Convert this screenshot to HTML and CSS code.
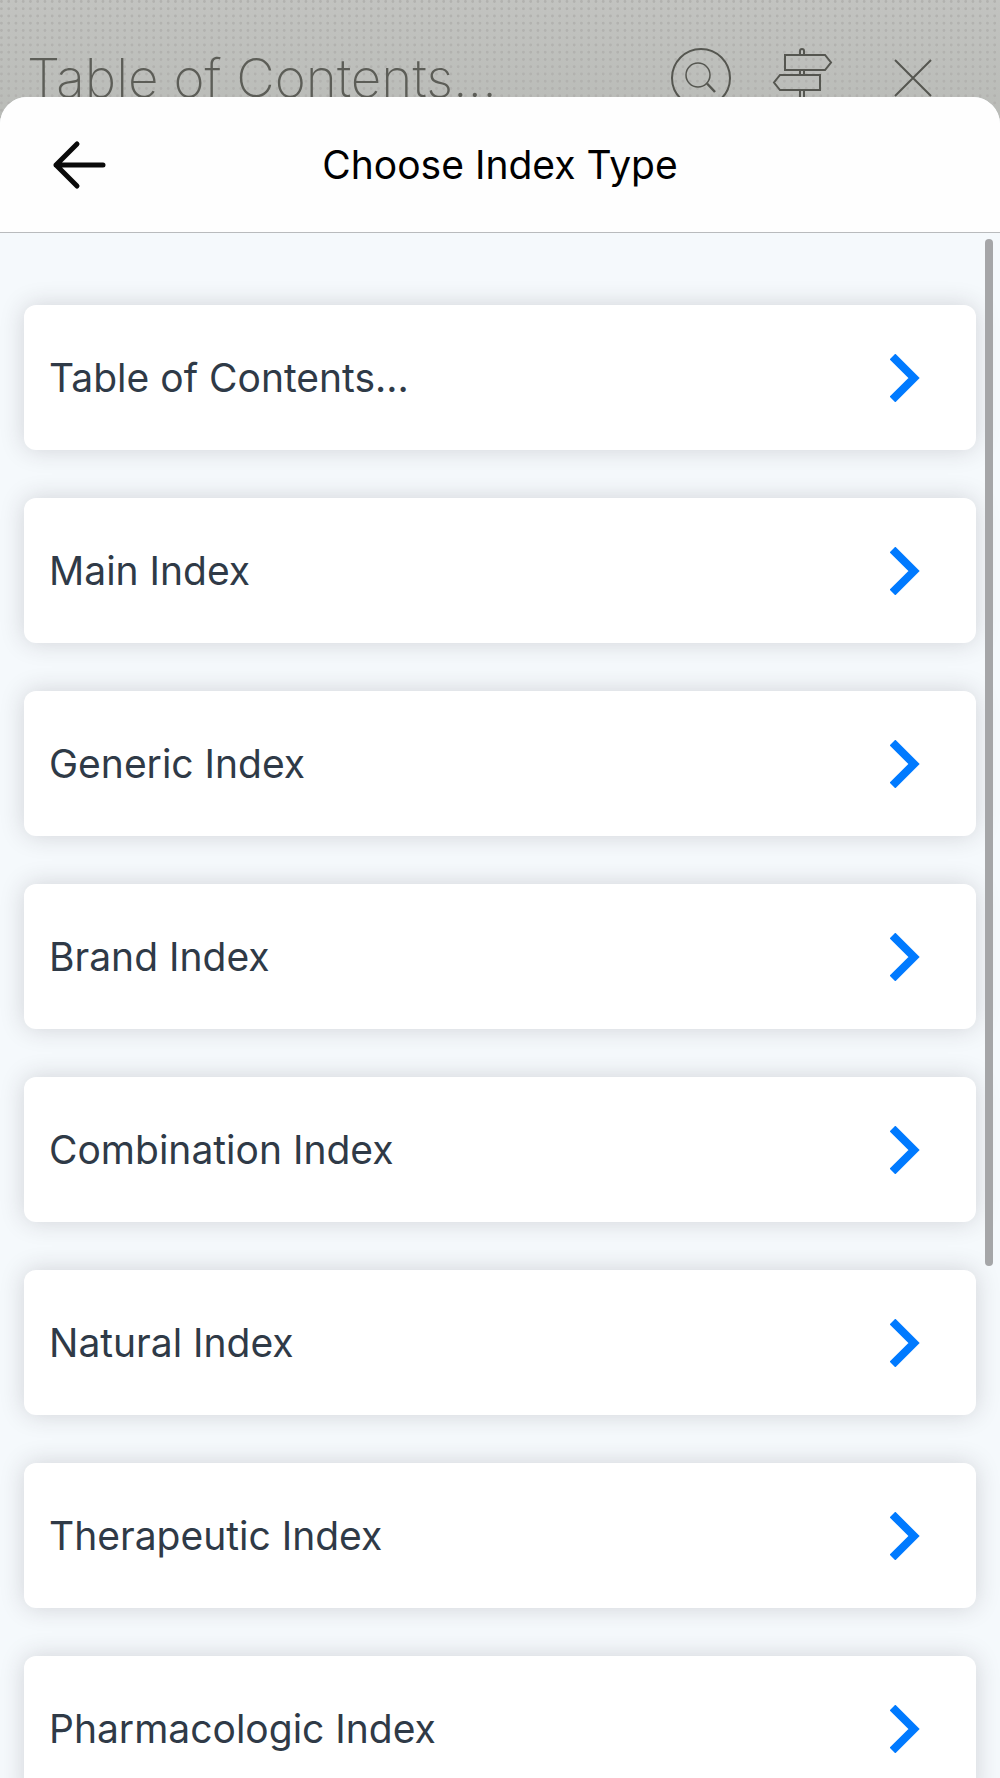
FILE: index.html
```
<!DOCTYPE html>
<html lang="en">
<head>
  <meta charset="UTF-8" />
  <meta name="viewport" content="width=device-width, initial-scale=1.0" />
  <title>Choose Index Type</title>
  <link rel="stylesheet" href="styles.css">
</head>
<body>
  <header class="topbar">
    <h2 class="topbar-title">Table of Contents...</h2>
    <div class="topbar-actions">
      <button class="icon-btn" aria-label="Search">
        <svg width="62" height="62" viewBox="0 0 62 62">
          <circle cx="31" cy="31" r="29" stroke-width="2" />
          <circle cx="28" cy="28" r="12" stroke-width="1.5" />
          <path d="M37 36.500L45 45" stroke-width="2.500" />
        </svg>
      </button>
      <button class="icon-btn" aria-label="Navigate">
        <svg width="58" height="62" viewBox="0 0 58 62">
          <path d="M26 8V4a2 2 0 0 1 4 0V8M26 23v5M30 23v5M26 43v18M30 43v18" />
          <path d="M11 8H51L57 15.500L51 23H11Z" />
          <path d="M46 28H6L0 35.500L6 43H46Z" />
        </svg>
      </button>
      <button class="icon-btn" aria-label="Close">
        <svg width="38" height="38" viewBox="0 0 38 38">
          <path d="M1 1L37 37M37 1L1 37" />
        </svg>
      </button>
    </div>
  </header>

  <main class="sheet">
    <div class="sheet-header">
      <button class="back-btn" aria-label="Back">
        <svg width="54" height="50" viewBox="0 0 54 50">
          <path d="M51 25H4M25 4L4 25L25 46" />
        </svg>
      </button>
      <h1 class="sheet-title">Choose Index Type</h1>
    </div>

    <div class="sheet-body">
      <nav class="index-list">
        <a class="card" href="#contents">Table of Contents...
          <svg class="chevron" viewBox="0 0 30 48"><path d="M2.500 2.500L24 24L2.500 45.500" /></svg>
        </a>
        <a class="card" href="#main">Main Index
          <svg class="chevron" viewBox="0 0 30 48"><path d="M2.500 2.500L24 24L2.500 45.500" /></svg>
        </a>
        <a class="card" href="#generic">Generic Index
          <svg class="chevron" viewBox="0 0 30 48"><path d="M2.500 2.500L24 24L2.500 45.500" /></svg>
        </a>
        <a class="card" href="#brand">Brand Index
          <svg class="chevron" viewBox="0 0 30 48"><path d="M2.500 2.500L24 24L2.500 45.500" /></svg>
        </a>
        <a class="card" href="#combination">Combination Index
          <svg class="chevron" viewBox="0 0 30 48"><path d="M2.500 2.500L24 24L2.500 45.500" /></svg>
        </a>
        <a class="card" href="#natural">Natural Index
          <svg class="chevron" viewBox="0 0 30 48"><path d="M2.500 2.500L24 24L2.500 45.500" /></svg>
        </a>
        <a class="card" href="#therapeutic">Therapeutic Index
          <svg class="chevron" viewBox="0 0 30 48"><path d="M2.500 2.500L24 24L2.500 45.500" /></svg>
        </a>
        <a class="card" href="#pharmacologic">Pharmacologic Index
          <svg class="chevron" viewBox="0 0 30 48"><path d="M2.500 2.500L24 24L2.500 45.500" /></svg>
        </a>
      </nav>
      <div class="scroll-thumb"></div>
    </div>
  </main>
</body>
</html>
```
FILE: styles.css
```
*, *::before, *::after {
  box-sizing: border-box;
}

body {
  margin: 0;
  height: 100vh;
  display: flex;
  flex-direction: column;
  overflow: hidden;
  font-family: Inter, "Liberation Sans", sans-serif;
  background: #bbbdb9;
}

h1, h2 {
  margin: 0;
}

button {
  padding: 0;
  border: 0;
  background: none;
  cursor: pointer;
}

svg {
  display: block;
  fill: none;
}

/* dimmed page behind the sheet */
.topbar {
  display: flex;
  align-items: center;
  justify-content: space-between;
  padding: 32px 68px 0 27px;
  height: 124px;
  flex-shrink: 0;
  background:
    url("data:image/svg+xml,%3Csvg xmlns='http://www.w3.org/2000/svg' width='29' height='29' viewBox='0 0 4 4'%3E%3Cpath stroke='%23b2b2af' stroke-width='.4' stroke-linecap='round' stroke-dasharray='0 1' d='M.2 .2h3.500M.2 1.200h3.500M.2 2.200h3.500M.2 3.200h3.500'/%3E%3C/svg%3E"),
    linear-gradient(#c2c3c0, #b9bbb7);
}

.topbar-title {
  font-size: 53px;
  line-height: 64px;
  font-weight: 200;
  color: #5c5d57;
}

.topbar-actions {
  display: flex;
  align-items: center;
  gap: 42px;
}

.icon-btn svg {
  stroke: #555650;
  stroke-width: 2;
  overflow: visible;
}

.icon-btn:last-child {
  margin-left: 20px;
}

.sheet {
  position: relative;
  flex: 1;
  min-height: 0;
  margin-top: -27px;
  display: flex;
  flex-direction: column;
  overflow: hidden;
  border-radius: 27px 27px 0 0;
  background: #f5f9fc;
}

.sheet-header {
  display: grid;
  grid-template-columns: 1fr auto 1fr;
  align-items: center;
  padding: 0 52px;
  height: 136px;
  flex-shrink: 0;
  background: #fefefe;
  border-bottom: 1px solid #b9bbbd;
}

.back-btn {
  justify-self: start;
}

.back-btn svg {
  stroke: #0a0a0a;
  stroke-width: 5;
  stroke-linecap: round;
  stroke-linejoin: round;
}

.sheet-title {
  font-size: 39px;
  line-height: 48px;
  font-weight: 400;
  color: #000;
}

.sheet-body {
  position: relative;
  flex: 1;
  min-height: 0;
}

.index-list {
  display: flex;
  flex-direction: column;
  gap: 48px;
  height: 100%;
  padding: 72px 24px;
  overflow-y: auto;
  scrollbar-width: none;
}

.card {
  display: flex;
  align-items: center;
  justify-content: space-between;
  flex-shrink: 0;
  padding: 49px 56px 48px 25px;
  border-radius: 12px;
  background: #fff;
  box-shadow: 0 0 24px rgba(50, 40, 50, 0.18);
  font-size: 39px;
  line-height: 48px;
  color: #2f3a47;
  text-decoration: none;
}

.chevron {
  width: 30px;
  height: 48px;
  stroke: #007aff;
  stroke-width: 8;
}

.scroll-thumb {
  position: absolute;
  top: 6px;
  right: 7px;
  width: 8px;
  height: 66.5%;
  border-radius: 4px;
  background: #a5a6a8;
}
```
